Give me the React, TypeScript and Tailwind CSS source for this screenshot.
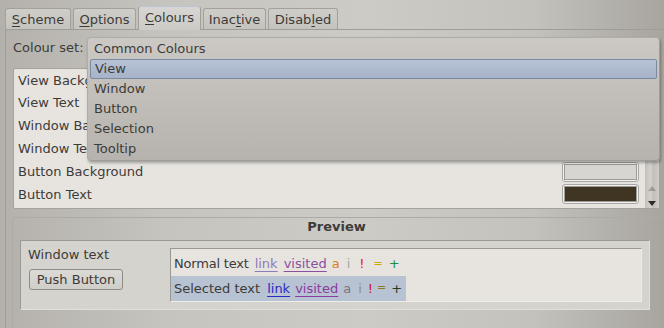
import React from "react";

interface Tab {
  label: string;
  key: number;
  width: string;
  active?: boolean;
}

const tabs: Tab[] = [
  { label: "Scheme", key: 0, width: "w-[66px]" },
  { label: "Options", key: 0, width: "w-[63px]" },
  { label: "Colours", key: 0, width: "w-[63px]", active: true },
  { label: "Inactive", key: 4, width: "w-[63px]" },
  { label: "Disabled", key: 5, width: "w-[70px]" },
];

const colourRows = [
  { name: "View Background", swatch: "bg-[#e7e4e0]" },
  { name: "View Text", swatch: "bg-[#3b3935]" },
  { name: "Window Background", swatch: "bg-[#cecbc6]" },
  { name: "Window Text", swatch: "bg-[#3b3935]" },
  { name: "Button Background", swatch: "bg-[#d6d5d2]" },
  { name: "Button Text", swatch: "bg-[#403522]" },
];

const colourSets = ["Common Colours", "View", "Window", "Button", "Selection", "Tooltip"];

function TabLabel({ tab }: { tab: Tab }) {
  const first = tab.label.slice(0, tab.key);
  const mnem = tab.label.charAt(tab.key);
  const rest = tab.label.slice(tab.key + 1);
  return (
    <span>
      {first}
      <span className="underline underline-offset-[2px]">{mnem}</span>
      {rest}
    </span>
  );
}

function Swatch({ fill }: { fill: string }) {
  return (
    <div className="w-[77px] h-[20px] rounded-[3px] border border-[#a9a7a3] bg-[#f2f1ef] p-[1px]">
      <div className={`w-full h-full border border-[#9d9b97] ${fill}`} />
    </div>
  );
}

export default function App() {
  return (
    <div className="relative w-[664px] h-[328px] overflow-hidden flex flex-col pt-[6px] pl-[5px] font-['DejaVu_Sans',sans-serif] text-[13px] text-[#3d3b38] bg-[linear-gradient(90deg,#b4b1ac,#c6c4bf_25%,#cdcbc6_55%,#c4c2bd_80%,#a8a59f)]">
      {/* tab bar */}
      <div className="flex items-end h-[23px] gap-[2px] leading-none">
        {tabs.map(tab =>
          tab.active ? (
            <div
              key={tab.label}
              className={`relative z-10 -mb-px h-[24px] ${tab.width} flex items-center justify-center rounded-t-[3px] border border-b-0 border-[#a19e99] border-t-[#b9c3d3] bg-[linear-gradient(#d8d6d2,#cdcbc6)] pb-[2px]`}
            >
              <TabLabel tab={tab} />
            </div>
          ) : (
            <div
              key={tab.label}
              className={`h-[21px] ${tab.width} flex items-center justify-center rounded-t-[3px] border border-b-0 border-[#a4a19c] bg-[linear-gradient(#cfcdc8,#c5c3be)]`}
            >
              <TabLabel tab={tab} />
            </div>
          )
        )}
      </div>

      {/* tab panel */}
      <div className="flex-1 flex flex-col border-l border-t border-[#a09d98] pl-[7px] pt-[7px] pr-[4px]">
        <div className="h-[22px] flex items-center">Colour set:</div>

        {/* colour list */}
        <div className="mt-[9px] h-[141px] flex rounded-[2px] border border-[#a5a29d] bg-[#e7e4e0]">
          <div className="flex-1 flex flex-col pl-[4px] pr-[6px]">
            {colourRows.map(row => (
              <div key={row.name} className="h-[22.8px] flex items-center justify-between">
                <span>{row.name}</span>
                <Swatch fill={row.swatch} />
              </div>
            ))}
          </div>
          <div className="w-[14px] flex flex-col justify-end items-center pb-[2px] bg-[linear-gradient(90deg,#c3c0bb,#d4d1cc_40%,#c3c0bb_60%,#d0cdc8)]">
            <svg width="8" height="5" viewBox="0 0 8 5" className="mb-[2px] opacity-30">
              <path d="M0 5 L8 5 L4 0 Z" fill="#3b3935" />
            </svg>
            <svg width="8" height="5" viewBox="0 0 8 5" className="mt-[8px]">
              <path d="M0 0 L8 0 L4 5 Z" fill="#2e2b28" />
            </svg>
          </div>
        </div>

        {/* preview group */}
        <div className="mt-[8px] -ml-px flex-1 flex flex-col border-l border-t border-[#aeaba6]">
          <div className="h-[18px] flex items-center justify-center font-bold">Preview</div>
          <div className="ml-[7px] mr-[10px] mt-[4px] h-[70px] flex border border-[#9c9a96] border-r-[#e2e0dc] border-b-[#e2e0dc] bg-[#d5d3ce]">
            <div className="w-[149px] flex flex-col pl-[7px] pt-[6px]">
              <div className="h-[16px] flex items-center">Window text</div>
              <button className="mt-[6px] ml-px w-[94px] h-[21px] flex items-center justify-center rounded-[3px] border border-[#8f8c88] bg-[linear-gradient(#dcdad6,#d0cec9)] leading-none">
                Push Button
              </button>
            </div>
            <div className="mt-[7px] mr-[7px] h-[54px] flex-1 flex flex-col border border-[#9a9894] border-r-[#eeece9] border-b-[#eeece9] bg-[#e7e4e0]">
              <div className="mt-[5px] h-[20px] flex items-center pl-[3px]">
                <span className="tracking-[-0.2px]">Normal text</span>
                <span className="ml-[6px] text-[#8a7cb8] underline underline-offset-[3px]">link</span>
                <span className="ml-[6px] text-[#8a4f9e] underline underline-offset-[3px]">visited</span>
                <span className="ml-[5px] text-[#e07b20]">a</span>
                <span className="ml-[7px] text-[#a8a8a8]">i</span>
                <span className="ml-[9px] text-[#e51c23]">!</span>
                <span className="ml-[9px] text-[#c9a800] text-[11px]">=</span>
                <span className="ml-[6px] text-[#1e8c3a]">+</span>
              </div>
              <div className="mt-[2px] h-[25px] w-fit flex items-center pl-[3px] pr-[4px] bg-[#b7c3d3]">
                <span>Selected text</span>
                <span className="ml-[7px] text-[#2a2ac0] underline underline-offset-[3px]">link</span>
                <span className="ml-[5px] text-[#8b3a9e] underline underline-offset-[3px]">visited</span>
                <span className="ml-[5px] text-[#7e7480]">a</span>
                <span className="ml-[7px] text-[#8c8c8c]">i</span>
                <span className="ml-[6px] text-[#c4182e]">!</span>
                <span className="ml-[4px] text-[#8c7a20] text-[11px]">=</span>
                <span className="ml-[5px] text-[#2a3a2a]">+</span>
              </div>
            </div>
          </div>
        </div>
      </div>

      {/* open colour set popup */}
      <div className="absolute left-[87px] top-[37px] w-[573px] h-[124px] pt-px rounded-[4px] border border-[#b0ada8] border-r-[#a09d98] border-b-[#a09d98] bg-[linear-gradient(#ccc9c4,#b6b3ae)] shadow-[1px_2px_3px_rgba(0,0,0,0.3)]">
        {colourSets.map(name =>
          name === "View" ? (
            <div
              key={name}
              className="mx-[2px] h-[20px] flex items-center pl-[4px] rounded-[2px] border border-[#7b8aa1] bg-[linear-gradient(#b7c2d5,#a6b3c8)]"
            >
              {name}
            </div>
          ) : (
            <div key={name} className="h-[20px] flex items-center pl-[6px]">
              {name}
            </div>
          )
        )}
      </div>
    </div>
  );
}
